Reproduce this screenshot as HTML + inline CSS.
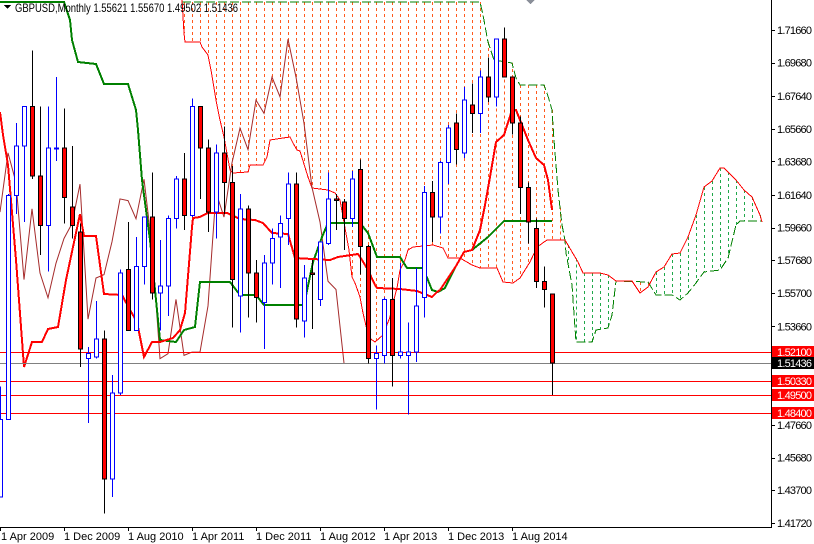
<!DOCTYPE html>
<html><head><meta charset="utf-8"><style>
html,body{margin:0;padding:0;background:#fff;width:814px;height:544px;overflow:hidden}
svg{display:block}
text{font-family:"Liberation Sans","DejaVu Sans",sans-serif;font-size:11px}
</style></head><body>
<svg id="s" width="814" height="544" viewBox="0 0 814 544" xmlns="http://www.w3.org/2000/svg" shape-rendering="crispEdges">
<defs><clipPath id="c"><rect x="0" y="0" width="771" height="527"/></clipPath></defs>
<rect width="814" height="544" fill="#fff"/>
<g id="chart" clip-path="url(#c)"></g>
<g id="hl">
<line x1="0" y1="352.5" x2="771" y2="352.5" stroke="#f00"/>
<line x1="0" y1="363.5" x2="771" y2="363.5" stroke="#808080"/>
<line x1="0" y1="381.5" x2="771" y2="381.5" stroke="#f00"/>
<line x1="0" y1="395.5" x2="771" y2="395.5" stroke="#f00"/>
<line x1="0" y1="413.5" x2="771" y2="413.5" stroke="#f00"/>
</g>
<g id="fg" clip-path="url(#c)"></g>
<line x1="771.5" y1="0" x2="771.5" y2="527" stroke="#000"/>
<line x1="0" y1="527.5" x2="772" y2="527.5" stroke="#000"/>
<g id="ticks" stroke="#000"></g>
<g fill="#000">
<text x="777" y="34" textLength="35">1.71660</text>
<text x="777" y="66.6" textLength="35">1.69680</text>
<text x="777" y="100.2" textLength="35">1.67640</text>
<text x="777" y="132.8" textLength="35">1.65660</text>
<text x="777" y="165.4" textLength="35">1.63680</text>
<text x="777" y="199" textLength="35">1.61640</text>
<text x="777" y="231.6" textLength="35">1.59660</text>
<text x="777" y="264.2" textLength="35">1.57680</text>
<text x="777" y="296.8" textLength="35">1.55700</text>
<text x="777" y="330.4" textLength="35">1.53660</text>
<text x="777" y="429" textLength="35">1.47660</text>
<text x="777" y="461.6" textLength="35">1.45680</text>
<text x="777" y="494.2" textLength="35">1.43700</text>
<text x="777" y="526.8" textLength="35">1.41720</text>
</g>
<rect x="772" y="346" width="42" height="12" fill="#f00"/>
<text x="777" y="356" fill="#fff" textLength="35">1.52100</text>
<rect x="772" y="357" width="42" height="12" fill="#000"/>
<text x="777" y="367" fill="#fff" textLength="35">1.51436</text>
<rect x="772" y="375" width="42" height="12" fill="#f00"/>
<text x="777" y="385" fill="#fff" textLength="35">1.50330</text>
<rect x="772" y="389" width="42" height="12" fill="#f00"/>
<text x="777" y="399" fill="#fff" textLength="35">1.49500</text>
<rect x="772" y="407" width="42" height="12" fill="#f00"/>
<text x="777" y="417" fill="#fff" textLength="35">1.48400</text>
<g fill="#000">
<text x="1" y="540">1 Apr 2009</text>
<text x="64" y="540">1 Dec 2009</text>
<text x="128" y="540">1 Aug 2010</text>
<text x="192" y="540">1 Apr 2011</text>
<text x="256" y="540">1 Dec 2011</text>
<text x="320" y="540">1 Aug 2012</text>
<text x="384" y="540">1 Apr 2013</text>
<text x="448" y="540">1 Dec 2013</text>
<text x="512" y="540">1 Aug 2014</text>
</g>
<polygon points="4,5 11,5 7.5,9" fill="#000"/>
<text x="15" y="12" fill="#000" style="font-size:12px" textLength="223" lengthAdjust="spacingAndGlyphs">GBPUSD,Monthly  1.55621 1.55670 1.49502 1.51436</text>
<polygon points="526,0 535,0 530.5,4" fill="#8a8f99"/>
</svg>
<script>
(function(){
var Y=function(p){return 30+(1.7166-p)*1646.6;};
var D=[[1.433,1.500,1.434,1.480],[1.480,1.617,1.483,1.616],[1.616,1.660,1.605,1.646],[1.646,1.670,1.600,1.670],[1.670,1.704,1.626,1.628],[1.628,1.670,1.580,1.598],[1.598,1.670,1.570,1.645],[1.645,1.688,1.637,1.645],[1.645,1.669,1.599,1.615],[1.609,1.646,1.590,1.598],
[1.594,1.599,1.512,1.523],[1.517,1.524,1.478,1.520],[1.518,1.552,1.517,1.529],[1.529,1.534,1.423,1.444],[1.444,1.507,1.433,1.496],[1.496,1.571,1.495,1.569],[1.571,1.600,1.537,1.534],[1.534,1.591,1.534,1.573],[1.573,1.598,1.562,1.603],[1.603,1.630,1.553,1.557],
[1.557,1.589,1.534,1.561],[1.561,1.604,1.543,1.602],[1.602,1.628,1.596,1.626],[1.626,1.642,1.595,1.604],[1.604,1.675,1.603,1.670],[1.670,1.670,1.614,1.645],[1.645,1.650,1.594,1.606],[1.606,1.647,1.590,1.642],[1.642,1.658,1.605,1.624],[1.624,1.634,1.536,1.565],
[1.555,1.617,1.533,1.608],[1.608,1.610,1.542,1.569],[1.569,1.577,1.539,1.554],[1.551,1.580,1.523,1.575],[1.575,1.596,1.562,1.590],[1.591,1.604,1.560,1.599],[1.602,1.630,1.586,1.623],[1.623,1.630,1.536,1.541],[1.540,1.574,1.530,1.566],[1.569,1.577,1.535,1.568],
[1.553,1.588,1.549,1.588],[1.587,1.630,1.586,1.614],[1.614,1.617,1.595,1.613],[1.612,1.614,1.583,1.602],[1.602,1.631,1.597,1.626],[1.632,1.638,1.568,1.585],[1.585,1.586,1.514,1.517],[1.517,1.525,1.486,1.520],[1.519,1.554,1.514,1.553],[1.553,1.566,1.500,1.519],
[1.519,1.575,1.517,1.521],[1.519,1.539,1.483,1.521],[1.521,1.572,1.515,1.549],[1.554,1.622,1.542,1.618],[1.618,1.625,1.588,1.603],[1.603,1.637,1.593,1.636],[1.636,1.659,1.623,1.657],[1.660,1.666,1.635,1.644],[1.642,1.682,1.639,1.674],[1.671,1.684,1.654,1.666],
[1.666,1.692,1.654,1.688],[1.688,1.700,1.673,1.676],[1.676,1.711,1.670,1.711],[1.711,1.718,1.690,1.688],[1.688,1.688,1.653,1.660],[1.660,1.664,1.605,1.621],[1.621,1.624,1.587,1.600],[1.596,1.602,1.560,1.564],[1.564,1.573,1.548,1.559],[1.5562,1.5567,1.4950,1.51436]];
function pl(a){return a.map(function(p){return p[0]+','+p[1]}).join(' ');}
function interp(a,x){if(x<a[0][0]||x>a[a.length-1][0])return null;for(var i=0;i<a.length-1;i++){if(x>=a[i][0]&&x<=a[i+1][0]){var t=(a[i+1][0]==a[i][0])?0:(x-a[i][0])/(a[i+1][0]-a[i][0]);return a[i][1]+t*(a[i+1][1]-a[i][1]);}}return null;}
var T=[[0,112],[3,135],[8,165],[16,260],[24,367],[32,342],[42,342],[48,329],[58,327],[66,280],[80,214],[84,236],[96,236],[104,294],[122,295],[130,310],[137,322],[144,357],[152,342],[160,342],[173,338],[180,330],[185,313],[192,227],[193,218],[200,217],[208,213],[227,213],[240,219],[255,220],[263,223],[272,233],[288,234],[295,258],[330,260],[338,257],[358,254],[362,260],[368,270],[375,285],[377,288],[400,289],[417,291],[432,297],[437,292],[440,290],[456,266],[464,252],[472,250],[480,230],[485,205],[490,177],[496,142],[504,135],[512,110],[516,110],[528,140],[536,158],[544,165],[548,180],[552,210]];
var K=[[0,2],[64,2],[70,20],[72,40],[78,62],[96,64],[104,84],[128,84],[136,110],[138,130],[142,180],[150,240],[160,340],[176,342],[184,330],[195,327],[200,282],[230,282],[240,295],[256,295],[264,305],[304,305],[313,262],[322,237],[328,223],[360,223],[368,233],[377,257],[400,257],[407,268],[423,268],[432,290],[438,292],[445,288],[456,266],[464,252],[472,250],[488,237],[504,221],[552,221]];
var A=[[182,0],[184,33],[185,42],[200,42],[202,47],[208,55],[211,70],[216,100],[220,120],[224,137],[230,170],[233,173],[248,172],[250,165],[263,165],[267,157],[270,140],[283,138],[290,137],[293,143],[297,150],[300,151],[308,177],[312,188],[328,190],[335,193],[340,200],[345,228],[349,250],[352,277],[355,283],[360,297],[363,313],[367,330],[368,337],[375,342],[383,335],[390,317],[393,303],[397,288],[400,270],[405,260],[408,250],[413,247],[433,245],[443,248],[448,258],[460,258],[472,265],[480,268],[497,268],[503,282],[513,283],[520,278],[530,262],[537,247],[547,240],[565,240],[578,262],[583,273],[600,273],[608,275],[616,281],[632,281],[640,293],[648,287],[656,272],[664,267],[672,254],[680,253],[688,237],[696,215],[704,187],[712,181],[720,168],[724,168],[736,180],[744,190],[752,197],[760,215],[762,222]];
var B=[[182,2],[480,2],[483,15],[488,42],[494,60],[512,63],[516,78],[520,85],[544,85],[548,96],[552,110],[554,140],[558,190],[562,225],[565,240],[566,253],[572,285],[576,342],[592,342],[596,330],[608,328],[612,315],[616,281],[648,282],[656,295],[672,295],[680,300],[688,293],[696,283],[704,272],[720,270],[728,258],[736,225],[740,221],[762,221]];
var h='';
for(var x=184;x<=760;x+=8){var a=interp(A,x),b=interp(B,x);if(a==null||b==null)continue;var col=b<a?'#ff5a1e':'#1fa84a';h+='<line x1="'+(x+.5)+'" y1="'+Math.min(a,b)+'" x2="'+(x+.5)+'" y2="'+Math.max(a,b)+'" stroke="'+col+'" stroke-dasharray="3,3"/>';}
h+='<polyline points="'+pl(B)+'" fill="none" stroke="#008000" stroke-dasharray="9,3"/>';
h+='<polyline points="'+pl(A)+'" fill="none" stroke="#f00"/>';
var C=[];for(var i=26;i<D.length;i++)C.push([8*(i-26),Y(D[i][3])]);
h+='<polyline points="'+pl(C)+'" fill="none" stroke="#a52a2a" shape-rendering="auto"/>';
h+='<polyline points="'+pl(K)+'" fill="none" stroke="#008000" stroke-width="2"/>';
h+='<polyline points="'+pl(T)+'" fill="none" stroke="#f00" stroke-width="2"/>';
document.getElementById('chart').innerHTML=h;
var g='';
for(var i=0;i<D.length;i++){var d=D[i],cx=8*i,o=Y(d[0]),hi=Y(d[1]),lo=Y(d[2]),c=Y(d[3]);var bull=d[3]>=d[0];var bt=Math.min(o,c),bb=Math.max(o,c);if(bb-bt<1)bb=bt+1;
g+='<line x1="'+(cx+.5)+'" y1="'+hi+'" x2="'+(cx+.5)+'" y2="'+lo+'" stroke="'+(bull?'#00f':'#000')+'"/>';
g+='<rect x="'+(cx-1.5)+'" y="'+bt+'" width="4" height="'+(bb-bt)+'" fill="'+(bull?'#fff':'#f00')+'" stroke="'+(bull?'#00f':'#000')+'"/>';}
document.getElementById('fg').innerHTML=g;
var t='';var ps=[1.7166,1.6968,1.6764,1.6566,1.6368,1.6164,1.5966,1.5768,1.557,1.5366,1.4766,1.4568,1.437,1.4172];
ps.forEach(function(p){var y=Math.round(Y(p))+.5;t+='<line x1="771" y1="'+y+'" x2="775" y2="'+y+'"/>';});
for(var k=0;k<=8;k++){t+='<line x1="'+(64*k+.5)+'" y1="527" x2="'+(64*k+.5)+'" y2="531"/>';}
document.getElementById('ticks').innerHTML=t;
})();
</script>
</body></html>
